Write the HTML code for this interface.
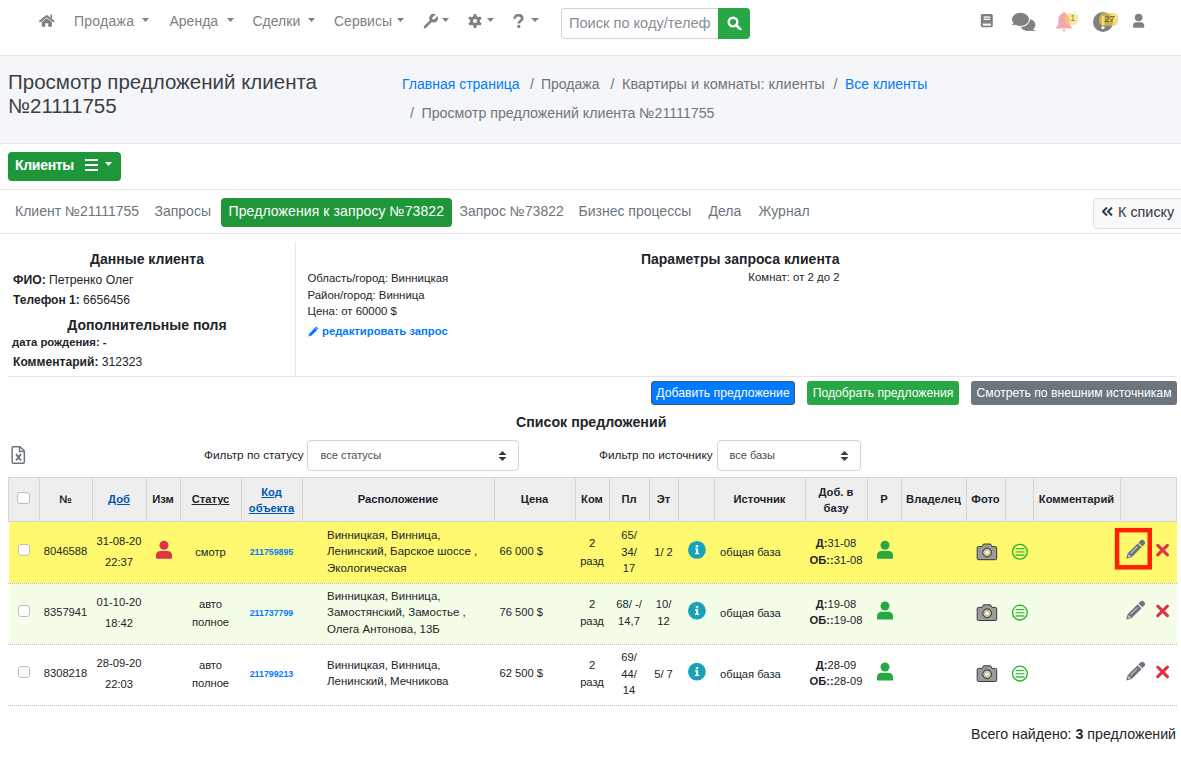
<!DOCTYPE html><html><head><meta charset="utf-8"><style>
html,body{margin:0;padding:0;width:1181px;height:769px;overflow:hidden;background:#fff;}
body{position:relative;font-family:"Liberation Sans", sans-serif;}
.t{position:absolute;white-space:nowrap;line-height:1;}
.r{position:absolute;box-sizing:border-box;}
</style></head><body>
<div class="r" style="left:0px;top:55px;width:1181px;height:1px;background:#e4e4e4;"></div>
<svg class="r" style="left:39px;top:14px;" width="17" height="13" viewBox="0 0 17 13" preserveAspectRatio="none"><path d="M1.1 7.3 L7.7 2.1 L14.4 7.3" stroke="#808080" stroke-width="2" stroke-linecap="round" stroke-linejoin="round" fill="none"/><path d="M2.8 7.9 L7.7 4.3 L12.9 7.9 L12.9 12.8 L9.2 12.8 L9.2 9.2 L6.3 9.2 L6.3 12.8 L2.8 12.8 Z" fill="#808080"/><rect x="11.4" y="0.6" width="1.7" height="3.8" fill="#808080"/></svg>
<div class="t" style="top:14.15px;font-size:14px;font-weight:400;color:#7f7f7f;letter-spacing:0.25px;left:74.00px;">Продажа</div>
<svg class="r" style="left:142px;top:18px;" width="7" height="4" viewBox="0 0 7 4" preserveAspectRatio="none"><polygon points="0,0 7,0 3.5,4" fill="#808080"/></svg>
<div class="t" style="top:14.15px;font-size:14px;font-weight:400;color:#7f7f7f;left:169.50px;">Аренда</div>
<svg class="r" style="left:226.5px;top:18px;" width="7.0" height="4" viewBox="0 0 7.0 4" preserveAspectRatio="none"><polygon points="0,0 7,0 3.5,4" fill="#808080"/></svg>
<div class="t" style="top:14.15px;font-size:14px;font-weight:400;color:#7f7f7f;left:252.50px;">Сделки</div>
<svg class="r" style="left:307.5px;top:18px;" width="7.0" height="4" viewBox="0 0 7.0 4" preserveAspectRatio="none"><polygon points="0,0 7,0 3.5,4" fill="#808080"/></svg>
<div class="t" style="top:14.15px;font-size:14px;font-weight:400;color:#7f7f7f;left:334.00px;">Сервисы</div>
<svg class="r" style="left:397px;top:18px;" width="7" height="4" viewBox="0 0 7 4" preserveAspectRatio="none"><polygon points="0,0 7,0 3.5,4" fill="#808080"/></svg>
<svg class="r" style="left:423px;top:13px;" width="16" height="16" viewBox="0 0 16 16" preserveAspectRatio="none"><path d="M2 14 L8.2 7.8" stroke="#808080" stroke-width="2.6" stroke-linecap="round"/><circle cx="10.6" cy="5.2" r="4.4" fill="#808080"/><polygon points="11.5,6.1 9.7,4.3 14.6,-0.6 16.4,1.2" fill="#fff"/><circle cx="10.6" cy="5.2" r="1.3" fill="#fff"/></svg>
<svg class="r" style="left:441.5px;top:18px;" width="7.0" height="4" viewBox="0 0 7.0 4" preserveAspectRatio="none"><polygon points="0,0 7,0 3.5,4" fill="#808080"/></svg>
<svg class="r" style="left:468px;top:14px;" width="14" height="14" viewBox="0 0 14 14" preserveAspectRatio="none"><g fill="#808080"><circle cx="7" cy="7" r="4.9"/><rect x="5.6" y="0" width="2.8" height="14" rx="0.6"/><rect x="5.6" y="0" width="2.8" height="14" rx="0.6" transform="rotate(60 7 7)"/><rect x="5.6" y="0" width="2.8" height="14" rx="0.6" transform="rotate(120 7 7)"/></g><circle cx="7" cy="7" r="2.1" fill="#fff"/></svg>
<svg class="r" style="left:486.5px;top:18px;" width="7.0" height="4" viewBox="0 0 7.0 4" preserveAspectRatio="none"><polygon points="0,0 7,0 3.5,4" fill="#808080"/></svg>
<svg class="r" style="left:513px;top:14px;" width="11" height="14" viewBox="0 0 11 14" preserveAspectRatio="none"><path d="M1.6 4.8 C1.6 2.3 3.4 1.2 5.4 1.2 C7.6 1.2 9.2 2.5 9.2 4.4 C9.2 6.8 5.8 7.2 5.8 9.4" stroke="#808080" stroke-width="2.7" fill="none"/><circle cx="5.8" cy="12.4" r="1.65" fill="#808080"/></svg>
<svg class="r" style="left:531px;top:18px;" width="8" height="4" viewBox="0 0 8 4" preserveAspectRatio="none"><polygon points="0,0 8,0 4.0,4" fill="#808080"/></svg>
<div class="r" style="left:561px;top:8px;width:158px;height:31px;border:1px solid #ced4da;border-right:none;border-radius:4px 0 0 4px;background:#fff;"></div>
<div class="t" style="top:15.64px;font-size:14.6px;font-weight:400;color:#868e96;left:569.00px;">Поиск по коду/телеф</div>
<div class="r" style="left:718px;top:8px;width:32px;height:31px;background:#28a745;border-radius:0 4px 4px 0;"></div>
<svg class="r" style="left:727px;top:16px;" width="15" height="14" viewBox="0 0 15 14" preserveAspectRatio="none"><circle cx="6" cy="6" r="4.3" stroke="#fff" stroke-width="2.4" fill="none"/><path d="M9 9 L13.5 13.5" stroke="#fff" stroke-width="2.6" stroke-linecap="round"/></svg>
<svg class="r" style="left:980px;top:13px;" width="14" height="15" viewBox="0 0 14 15" preserveAspectRatio="none"><rect x="0.8" y="1" width="12" height="13.3" rx="1.6" fill="#808080"/><rect x="3.6" y="3.4" width="6.6" height="1.3" fill="#fff"/><rect x="3.6" y="5.6" width="6.6" height="1.3" fill="#fff"/><rect x="2.8" y="10.6" width="8.2" height="2" fill="#fff"/></svg>
<svg class="r" style="left:1011px;top:12px;" width="26" height="20" viewBox="0 0 26 20" preserveAspectRatio="none"><ellipse cx="16.8" cy="12.9" rx="7.6" ry="6.1" fill="#808080"/><path d="M24.6 19.3 L20 15.5 L18.5 18.6 Z" fill="#808080"/><ellipse cx="9.5" cy="7.3" rx="9.6" ry="7.6" fill="#fff"/><ellipse cx="9.5" cy="7.3" rx="8.5" ry="6.6" fill="#808080"/><path d="M0.8 13.2 L3.6 10 L6.2 12.6 Z" fill="#808080"/></svg>
<svg class="r" style="left:1055px;top:12px;" width="18" height="20" viewBox="0 0 18 20" preserveAspectRatio="none"><path d="M9 0 C9.8 0 10.2 0.6 10.2 1.3 C13 2 14.6 4.8 14.6 7.8 L14.6 12.6 L17.6 16.6 L0.4 16.6 L3.4 12.6 L3.4 7.8 C3.4 4.8 5 2 7.8 1.3 C7.8 0.6 8.2 0 9 0 Z M7.3 17.8 L10.7 17.8 C10.7 19 9.9 19.6 9 19.6 C8.1 19.6 7.3 19 7.3 17.8 Z" fill="#f2a7b2"/></svg>
<div class="r" style="left:1065px;top:13px;width:13px;height:12px;background:rgba(255,215,80,0.55);border-radius:5px;"></div>
<div class="t" style="top:14.38px;font-size:9px;font-weight:400;color:rgba(90,80,60,0.75);left:1070.30px;">1</div>
<svg class="r" style="left:1093px;top:12px;" width="20" height="20" viewBox="0 0 20 20" preserveAspectRatio="none"><circle cx="10" cy="10" r="10" fill="#808080"/><rect x="8.6" y="4" width="2.8" height="9" fill="#fff"/><circle cx="10" cy="15.6" r="1.7" fill="#fff"/></svg>
<div class="r" style="left:1099px;top:13px;width:19px;height:13px;background:rgba(240,200,40,0.62);border-radius:5px;"></div>
<div class="t" style="top:14.26px;font-size:9.5px;font-weight:400;color:rgba(70,60,40,0.85);left:1104.30px;">27</div>
<svg class="r" style="left:1132px;top:13px;" width="14" height="15" viewBox="0 0 14 15" preserveAspectRatio="none"><circle cx="6.6" cy="4.5" r="3.8" fill="#808080"/><path d="M1 14.8 L1 12.5 C1 10.6 2.4 9.2 4.3 9.2 L8.9 9.2 C10.8 9.2 12.2 10.6 12.2 12.5 L12.2 14.8 Z" fill="#808080"/></svg>
<div class="r" style="left:0px;top:56px;width:1181px;height:87px;background:#f5f6f9;"></div>
<div class="r" style="left:0px;top:143px;width:1181px;height:1px;background:#e6e7ea;"></div>
<div class="t" style="top:72.25px;font-size:20.5px;font-weight:400;color:#3a3f44;left:8.00px;">Просмотр предложений клиента</div>
<div class="t" style="top:96.15px;font-size:20.5px;font-weight:400;color:#3a3f44;left:8.00px;">№21111755</div>
<div class="t" style="top:77.45px;font-size:14px;font-weight:400;color:#007bff;left:402.00px;">Главная страница</div>
<div class="t" style="top:77.45px;font-size:14px;font-weight:400;color:#6c757d;left:530.00px;">/</div>
<div class="t" style="top:77.45px;font-size:14px;font-weight:400;color:#6c757d;left:541.00px;">Продажа</div>
<div class="t" style="top:77.45px;font-size:14px;font-weight:400;color:#6c757d;left:610.50px;">/</div>
<div class="t" style="top:77.03px;font-size:14.5px;font-weight:400;color:#6c757d;left:622.00px;">Квартиры и комнаты: клиенты</div>
<div class="t" style="top:77.45px;font-size:14px;font-weight:400;color:#6c757d;left:833.50px;">/</div>
<div class="t" style="top:77.45px;font-size:14px;font-weight:400;color:#007bff;left:845.00px;">Все клиенты</div>
<div class="t" style="top:106.15px;font-size:14px;font-weight:400;color:#6c757d;left:410.00px;">/</div>
<div class="t" style="top:105.98px;font-size:14.2px;font-weight:400;color:#6c757d;left:421.50px;">Просмотр предложений клиента №21111755</div>
<div class="r" style="left:8px;top:152px;width:113px;height:29px;background:#20963a;border-radius:4px;"></div>
<div class="t" style="top:158.15px;font-size:14px;font-weight:700;color:#fff;letter-spacing:-0.3px;left:15.00px;">Клиенты</div>
<svg class="r" style="left:85px;top:159px;" width="13" height="12" viewBox="0 0 13 12" preserveAspectRatio="none"><rect x="0" y="0" width="13" height="2" fill="#fff"/><rect x="0" y="5" width="13" height="2" fill="#fff"/><rect x="0" y="10" width="13" height="2" fill="#fff"/></svg>
<svg class="r" style="left:105px;top:162px;" width="7" height="4" viewBox="0 0 7 4" preserveAspectRatio="none"><polygon points="0,0 7,0 3.5,4" fill="#fff"/></svg>
<div class="r" style="left:0px;top:189px;width:1181px;height:1px;background:#e3e5e8;"></div>
<div class="r" style="left:0px;top:233px;width:1181px;height:1px;background:#e3e5e8;"></div>
<div class="t" style="top:204.15px;font-size:14px;font-weight:400;color:#6c757d;left:15.00px;">Клиент №21111755</div>
<div class="t" style="top:204.15px;font-size:14px;font-weight:400;color:#6c757d;left:154.50px;">Запросы</div>
<div class="r" style="left:221px;top:198px;width:231px;height:29px;background:#20963a;border-radius:4px;"></div>
<div class="t" style="top:204.15px;font-size:14px;font-weight:400;color:#fff;letter-spacing:0.1px;left:228.50px;">Предложения к запросу №73822</div>
<div class="t" style="top:204.15px;font-size:14px;font-weight:400;color:#6c757d;left:459.50px;">Запрос №73822</div>
<div class="t" style="top:204.15px;font-size:14px;font-weight:400;color:#6c757d;left:578.50px;">Бизнес процессы</div>
<div class="t" style="top:204.15px;font-size:14px;font-weight:400;color:#6c757d;left:708.50px;">Дела</div>
<div class="t" style="top:204.15px;font-size:14px;font-weight:400;color:#6c757d;left:758.50px;">Журнал</div>
<div class="r" style="left:1093px;top:198px;width:97px;height:31px;background:#f8f9fa;border:1px solid #dee2e6;border-radius:4px;"></div>
<svg class="r" style="left:1102px;top:207px;" width="11" height="9" viewBox="0 0 11 9" preserveAspectRatio="none"><path d="M5 0.5 L1 4.5 L5 8.5 M10 0.5 L6 4.5 L10 8.5" stroke="#343a40" stroke-width="2" fill="none"/></svg>
<div class="t" style="top:204.51px;font-size:14.4px;font-weight:400;color:#343a40;left:1118.00px;">К списку</div>
<div class="t" style="top:252.35px;font-size:14px;font-weight:700;color:#212529;left:7.00px;width:280px;text-align:center;">Данные клиента</div>
<div class="t" style="top:274.27px;font-size:12.2px;font-weight:400;color:#212529;left:13.00px;"><b>ФИО:</b> Петренко Олег</div>
<div class="t" style="top:293.90px;font-size:12.05px;font-weight:400;color:#212529;left:13.00px;"><b>Телефон 1:</b> 6656456</div>
<div class="t" style="top:318.15px;font-size:14px;font-weight:700;color:#212529;left:7.00px;width:280px;text-align:center;">Дополнительные поля</div>
<div class="t" style="top:336.93px;font-size:11.3px;font-weight:700;color:#212529;left:12.00px;">дата рождения: -</div>
<div class="t" style="top:355.76px;font-size:12.1px;font-weight:400;color:#212529;left:13.00px;"><b>Комментарий:</b> 312323</div>
<div class="r" style="left:295px;top:242px;width:1px;height:134px;background:#e3e5e8;"></div>
<div class="r" style="left:8px;top:376px;width:1169px;height:1px;background:#e3e5e8;"></div>
<div class="t" style="top:272.75px;font-size:11.4px;font-weight:400;color:#212529;left:307.50px;">Область/город: Винницкая</div>
<div class="t" style="top:289.75px;font-size:11.4px;font-weight:400;color:#212529;left:307.50px;">Район/город: Винница</div>
<div class="t" style="top:306.35px;font-size:11.4px;font-weight:400;color:#212529;left:307.50px;">Цена: от 60000 $</div>
<svg class="r" style="left:308px;top:326px;" width="11" height="11" viewBox="0 0 11 11" preserveAspectRatio="none"><path d="M8.2 0.6 L10.4 2.8 L3.6 9.6 L0.5 10.5 L1.4 7.4 Z" fill="#007bff"/><path d="M7.2 1.6 L9.4 3.8" stroke="#fff" stroke-width="0.7"/></svg>
<div class="t" style="top:326.43px;font-size:11.3px;font-weight:700;color:#007bff;left:322.00px;">редактировать запрос</div>
<div class="t" style="top:251.75px;font-size:14px;font-weight:700;color:#212529;right:341.50px;">Параметры запроса клиента</div>
<div class="t" style="top:272.05px;font-size:11.4px;font-weight:400;color:#212529;right:341.50px;">Комнат: от 2 до 2</div>
<div class="r" style="left:651px;top:381px;width:144px;height:24px;background:#007bff;border:1px solid #4a5a6a;border-radius:3px;"></div>
<div class="t" style="top:387.07px;font-size:12.2px;font-weight:400;color:#fff;left:651.00px;width:144px;text-align:center;">Добавить предложение</div>
<div class="r" style="left:807px;top:381px;width:152px;height:24px;background:#28a745;border-radius:3px;"></div>
<div class="t" style="top:387.07px;font-size:12.2px;font-weight:400;color:#fff;left:807.00px;width:152px;text-align:center;">Подобрать предложения</div>
<div class="r" style="left:971px;top:381px;width:206px;height:24px;background:#6c757d;border-radius:3px;"></div>
<div class="t" style="top:387.07px;font-size:12.2px;font-weight:400;color:#fff;left:971.00px;width:206px;text-align:center;">Смотреть по внешним источникам</div>
<div class="t" style="top:415.18px;font-size:14.2px;font-weight:700;color:#212529;left:516.00px;">Список предложений</div>
<svg class="r" style="left:11px;top:446px;" width="15" height="19" viewBox="0 0 15 19" preserveAspectRatio="none"><path d="M2.3 0.75 L9 0.75 L13.35 5.1 L13.35 16 C13.35 16.7 12.9 17.15 12.2 17.15 L2.3 17.15 C1.6 17.15 1.15 16.7 1.15 16 L1.15 1.9 C1.15 1.2 1.6 0.75 2.3 0.75 Z" stroke="#6c757d" stroke-width="1.5" fill="none" stroke-linejoin="round"/><path d="M8.6 1 L8.6 5.5 L13.1 5.5" stroke="#6c757d" stroke-width="1.4" fill="none"/><path d="M5 8.2 L10 14.5 M10 8.2 L5 14.5" stroke="#6c757d" stroke-width="1.9"/></svg>
<div class="t" style="top:449.71px;font-size:11.8px;font-weight:400;color:#212529;left:204.00px;">Фильтр по статусу</div>
<div class="r" style="left:307px;top:440px;width:212px;height:31px;border:1px solid #ced4da;border-radius:4px;background:#fff;"></div>
<div class="t" style="top:449.89px;font-size:11px;font-weight:400;color:#495057;left:320.50px;">все статусы</div>
<svg class="r" style="left:498px;top:451px;" width="9" height="10" viewBox="0 0 9 10" preserveAspectRatio="none"><polygon points="4.5,0 8.5,4 0.5,4" fill="#343a40"/><polygon points="0.5,6 8.5,6 4.5,10" fill="#343a40"/></svg>
<div class="t" style="top:449.71px;font-size:11.8px;font-weight:400;color:#212529;left:599.00px;">Фильтр по источнику</div>
<div class="r" style="left:717px;top:440px;width:144px;height:31px;border:1px solid #ced4da;border-radius:4px;background:#fff;"></div>
<div class="t" style="top:449.89px;font-size:11px;font-weight:400;color:#495057;left:729.50px;">все базы</div>
<svg class="r" style="left:840px;top:451px;" width="9" height="10" viewBox="0 0 9 10" preserveAspectRatio="none"><polygon points="4.5,0 8.5,4 0.5,4" fill="#343a40"/><polygon points="0.5,6 8.5,6 4.5,10" fill="#343a40"/></svg>
<div class="r" style="left:8px;top:477px;width:1169px;height:45px;background:#eeeeee;border:1px solid #d6d6d6;"></div>
<div class="r" style="left:39px;top:477px;width:1px;height:45px;background:#d6d6d6;"></div>
<div class="r" style="left:92px;top:477px;width:1px;height:45px;background:#d6d6d6;"></div>
<div class="r" style="left:146px;top:477px;width:1px;height:45px;background:#d6d6d6;"></div>
<div class="r" style="left:180px;top:477px;width:1px;height:45px;background:#d6d6d6;"></div>
<div class="r" style="left:241px;top:477px;width:1px;height:45px;background:#d6d6d6;"></div>
<div class="r" style="left:302px;top:477px;width:1px;height:45px;background:#d6d6d6;"></div>
<div class="r" style="left:494px;top:477px;width:1px;height:45px;background:#d6d6d6;"></div>
<div class="r" style="left:575px;top:477px;width:1px;height:45px;background:#d6d6d6;"></div>
<div class="r" style="left:609px;top:477px;width:1px;height:45px;background:#d6d6d6;"></div>
<div class="r" style="left:649px;top:477px;width:1px;height:45px;background:#d6d6d6;"></div>
<div class="r" style="left:678px;top:477px;width:1px;height:45px;background:#d6d6d6;"></div>
<div class="r" style="left:714px;top:477px;width:1px;height:45px;background:#d6d6d6;"></div>
<div class="r" style="left:805px;top:477px;width:1px;height:45px;background:#d6d6d6;"></div>
<div class="r" style="left:867px;top:477px;width:1px;height:45px;background:#d6d6d6;"></div>
<div class="r" style="left:901px;top:477px;width:1px;height:45px;background:#d6d6d6;"></div>
<div class="r" style="left:966px;top:477px;width:1px;height:45px;background:#d6d6d6;"></div>
<div class="r" style="left:1005px;top:477px;width:1px;height:45px;background:#d6d6d6;"></div>
<div class="r" style="left:1033px;top:477px;width:1px;height:45px;background:#d6d6d6;"></div>
<div class="r" style="left:1120px;top:477px;width:1px;height:45px;background:#d6d6d6;"></div>
<div class="r" style="left:17.3px;top:492.3px;width:12.3px;height:12.099999999999966px;border:1.4px solid #bdbdbd;border-radius:3px;background:#fff;"></div>
<div class="t" style="top:494.12px;font-size:11.2px;font-weight:700;color:#212529;left:35.50px;width:60px;text-align:center;">№</div>
<div class="t" style="top:494.12px;font-size:11.2px;font-weight:700;color:#0056b3;left:89.00px;width:60px;text-align:center;"><u>Доб</u></div>
<div class="t" style="top:494.12px;font-size:11.2px;font-weight:700;color:#212529;left:143.00px;width:40px;text-align:center;">Изм</div>
<div class="t" style="top:494.12px;font-size:11.2px;font-weight:700;color:#212529;left:180.50px;width:60px;text-align:center;"><u>Статус</u></div>
<div class="t" style="top:486.82px;font-size:11.2px;font-weight:700;color:#0056b3;left:241.50px;width:60px;text-align:center;"><u>Код</u></div>
<div class="t" style="top:502.52px;font-size:11.2px;font-weight:700;color:#0056b3;left:241.50px;width:60px;text-align:center;"><u>объекта</u></div>
<div class="t" style="top:494.12px;font-size:11.2px;font-weight:700;color:#212529;left:303.00px;width:190px;text-align:center;">Расположение</div>
<div class="t" style="top:494.12px;font-size:11.2px;font-weight:700;color:#212529;left:494.50px;width:80px;text-align:center;">Цена</div>
<div class="t" style="top:494.12px;font-size:11.2px;font-weight:700;color:#212529;left:575.00px;width:34px;text-align:center;">Ком</div>
<div class="t" style="top:494.12px;font-size:11.2px;font-weight:700;color:#212529;left:609.00px;width:40px;text-align:center;">Пл</div>
<div class="t" style="top:494.12px;font-size:11.2px;font-weight:700;color:#212529;left:649.50px;width:28px;text-align:center;">Эт</div>
<div class="t" style="top:494.12px;font-size:11.2px;font-weight:700;color:#212529;left:714.50px;width:90px;text-align:center;">Источник</div>
<div class="t" style="top:486.82px;font-size:11.2px;font-weight:700;color:#212529;left:805.00px;width:62px;text-align:center;">Доб. в</div>
<div class="t" style="top:502.52px;font-size:11.2px;font-weight:700;color:#212529;left:805.00px;width:62px;text-align:center;">базу</div>
<div class="t" style="top:494.12px;font-size:11.2px;font-weight:700;color:#212529;left:867.00px;width:34px;text-align:center;">Р</div>
<div class="t" style="top:494.12px;font-size:11.2px;font-weight:700;color:#212529;left:901.00px;width:65px;text-align:center;">Владелец</div>
<div class="t" style="top:494.12px;font-size:11.2px;font-weight:700;color:#212529;left:966.00px;width:39px;text-align:center;">Фото</div>
<div class="t" style="top:494.12px;font-size:11.2px;font-weight:700;color:#212529;left:1033.00px;width:87px;text-align:center;">Комментарий</div>
<div class="r" style="left:9px;top:522px;width:1168px;height:62px;background:#fff96f;"></div>
<div class="r" style="left:8px;top:583px;width:1169px;height:1px;border-top:1px dotted #bdbdbd;background:#f8fcf2;"></div>
<div class="r" style="left:18.4px;top:544.0px;width:12.100000000000001px;height:12.299999999999955px;border:1.4px solid #bdbdbd;border-radius:3px;background:#fff;"></div>
<div class="t" style="top:546.32px;font-size:11.2px;font-weight:400;color:#212529;left:25.50px;width:80px;text-align:center;">8046588</div>
<div class="t" style="top:536.22px;font-size:11.2px;font-weight:400;color:#212529;left:79.00px;width:80px;text-align:center;">31-08-20</div>
<div class="t" style="top:557.42px;font-size:11.2px;font-weight:400;color:#212529;left:79.00px;width:80px;text-align:center;">22:37</div>
<div class="t" style="top:547.02px;font-size:11.2px;font-weight:400;color:#212529;left:170.50px;width:80px;text-align:center;">смотр</div>
<div class="t" style="top:548.35px;font-size:8.8px;font-weight:700;color:#007bff;left:231.50px;width:80px;text-align:center;">211759895</div>
<div class="t" style="top:529.87px;font-size:11.5px;font-weight:400;color:#212529;left:327.00px;">Винницкая, Винница,</div>
<div class="t" style="top:546.37px;font-size:11.5px;font-weight:400;color:#212529;left:327.00px;">Ленинский, Барское шоссе ,</div>
<div class="t" style="top:562.87px;font-size:11.5px;font-weight:400;color:#212529;left:327.00px;">Экологическая</div>
<div class="t" style="top:546.32px;font-size:11.2px;font-weight:400;color:#212529;left:499.50px;">66 000 $</div>
<div class="t" style="top:537.92px;font-size:11.2px;font-weight:400;color:#212529;left:552.00px;width:80px;text-align:center;">2</div>
<div class="t" style="top:555.52px;font-size:11.2px;font-weight:400;color:#212529;left:552.00px;width:80px;text-align:center;">разд</div>
<div class="t" style="top:530.42px;font-size:11.2px;font-weight:400;color:#212529;left:589.00px;width:80px;text-align:center;">65/</div>
<div class="t" style="top:546.72px;font-size:11.2px;font-weight:400;color:#212529;left:589.00px;width:80px;text-align:center;">34/</div>
<div class="t" style="top:563.02px;font-size:11.2px;font-weight:400;color:#212529;left:589.00px;width:80px;text-align:center;">17</div>
<div class="t" style="top:546.72px;font-size:11.2px;font-weight:400;color:#212529;left:623.50px;width:80px;text-align:center;">1/ 2</div>
<div class="t" style="top:547.12px;font-size:11.2px;font-weight:400;color:#212529;left:720.00px;">общая база</div>
<div class="t" style="top:538.32px;font-size:11.2px;font-weight:400;color:#212529;left:805.00px;width:62px;text-align:center;"><b>Д:</b>31-08</div>
<div class="t" style="top:554.52px;font-size:11.2px;font-weight:400;color:#212529;left:805.00px;width:62px;text-align:center;"><b>ОБ::</b>31-08</div>
<div class="r" style="left:9px;top:584px;width:1168px;height:61px;background:#f4fde8;"></div>
<div class="r" style="left:8px;top:644px;width:1169px;height:1px;border-top:1px dotted #bdbdbd;background:#f8fcf2;"></div>
<div class="r" style="left:18.4px;top:604.8000000000001px;width:12.100000000000001px;height:12.299999999999955px;border:1.4px solid #bdbdbd;border-radius:3px;background:#fff;"></div>
<div class="t" style="top:607.12px;font-size:11.2px;font-weight:400;color:#212529;left:25.50px;width:80px;text-align:center;">8357941</div>
<div class="t" style="top:597.02px;font-size:11.2px;font-weight:400;color:#212529;left:79.00px;width:80px;text-align:center;">01-10-20</div>
<div class="t" style="top:618.22px;font-size:11.2px;font-weight:400;color:#212529;left:79.00px;width:80px;text-align:center;">18:42</div>
<div class="t" style="top:599.07px;font-size:11.2px;font-weight:400;color:#212529;left:170.50px;width:80px;text-align:center;">авто</div>
<div class="t" style="top:616.57px;font-size:11.2px;font-weight:400;color:#212529;left:170.50px;width:80px;text-align:center;">полное</div>
<div class="t" style="top:609.15px;font-size:8.8px;font-weight:700;color:#007bff;left:231.50px;width:80px;text-align:center;">211737799</div>
<div class="t" style="top:590.67px;font-size:11.5px;font-weight:400;color:#212529;left:327.00px;">Винницкая, Винница,</div>
<div class="t" style="top:607.17px;font-size:11.5px;font-weight:400;color:#212529;left:327.00px;">Замостянский, Замостье ,</div>
<div class="t" style="top:623.67px;font-size:11.5px;font-weight:400;color:#212529;left:327.00px;">Олега Антонова, 13Б</div>
<div class="t" style="top:607.12px;font-size:11.2px;font-weight:400;color:#212529;left:499.50px;">76 500 $</div>
<div class="t" style="top:598.72px;font-size:11.2px;font-weight:400;color:#212529;left:552.00px;width:80px;text-align:center;">2</div>
<div class="t" style="top:616.32px;font-size:11.2px;font-weight:400;color:#212529;left:552.00px;width:80px;text-align:center;">разд</div>
<div class="t" style="top:599.37px;font-size:11.2px;font-weight:400;color:#212529;left:589.00px;width:80px;text-align:center;">68/ -/</div>
<div class="t" style="top:615.67px;font-size:11.2px;font-weight:400;color:#212529;left:589.00px;width:80px;text-align:center;">14,7</div>
<div class="t" style="top:599.02px;font-size:11.2px;font-weight:400;color:#212529;left:623.50px;width:80px;text-align:center;">10/</div>
<div class="t" style="top:616.02px;font-size:11.2px;font-weight:400;color:#212529;left:623.50px;width:80px;text-align:center;">12</div>
<div class="t" style="top:607.92px;font-size:11.2px;font-weight:400;color:#212529;left:720.00px;">общая база</div>
<div class="t" style="top:599.12px;font-size:11.2px;font-weight:400;color:#212529;left:805.00px;width:62px;text-align:center;"><b>Д:</b>19-08</div>
<div class="t" style="top:615.32px;font-size:11.2px;font-weight:400;color:#212529;left:805.00px;width:62px;text-align:center;"><b>ОБ::</b>19-08</div>
<div class="r" style="left:9px;top:645px;width:1168px;height:61px;background:#ffffff;"></div>
<div class="r" style="left:8px;top:705px;width:1169px;height:1px;border-top:1px dotted #bdbdbd;background:#f8fcf2;"></div>
<div class="r" style="left:18.4px;top:665.8000000000001px;width:12.100000000000001px;height:12.299999999999955px;border:1.4px solid #bdbdbd;border-radius:3px;background:#fff;"></div>
<div class="t" style="top:668.12px;font-size:11.2px;font-weight:400;color:#212529;left:25.50px;width:80px;text-align:center;">8308218</div>
<div class="t" style="top:658.02px;font-size:11.2px;font-weight:400;color:#212529;left:79.00px;width:80px;text-align:center;">28-09-20</div>
<div class="t" style="top:679.22px;font-size:11.2px;font-weight:400;color:#212529;left:79.00px;width:80px;text-align:center;">22:03</div>
<div class="t" style="top:660.07px;font-size:11.2px;font-weight:400;color:#212529;left:170.50px;width:80px;text-align:center;">авто</div>
<div class="t" style="top:677.57px;font-size:11.2px;font-weight:400;color:#212529;left:170.50px;width:80px;text-align:center;">полное</div>
<div class="t" style="top:670.15px;font-size:8.8px;font-weight:700;color:#007bff;left:231.50px;width:80px;text-align:center;">211799213</div>
<div class="t" style="top:659.92px;font-size:11.5px;font-weight:400;color:#212529;left:327.00px;">Винницкая, Винница,</div>
<div class="t" style="top:676.42px;font-size:11.5px;font-weight:400;color:#212529;left:327.00px;">Ленинский, Мечникова</div>
<div class="t" style="top:668.12px;font-size:11.2px;font-weight:400;color:#212529;left:499.50px;">62 500 $</div>
<div class="t" style="top:659.72px;font-size:11.2px;font-weight:400;color:#212529;left:552.00px;width:80px;text-align:center;">2</div>
<div class="t" style="top:677.32px;font-size:11.2px;font-weight:400;color:#212529;left:552.00px;width:80px;text-align:center;">разд</div>
<div class="t" style="top:652.22px;font-size:11.2px;font-weight:400;color:#212529;left:589.00px;width:80px;text-align:center;">69/</div>
<div class="t" style="top:668.52px;font-size:11.2px;font-weight:400;color:#212529;left:589.00px;width:80px;text-align:center;">44/</div>
<div class="t" style="top:684.82px;font-size:11.2px;font-weight:400;color:#212529;left:589.00px;width:80px;text-align:center;">14</div>
<div class="t" style="top:668.52px;font-size:11.2px;font-weight:400;color:#212529;left:623.50px;width:80px;text-align:center;">5/ 7</div>
<div class="t" style="top:668.92px;font-size:11.2px;font-weight:400;color:#212529;left:720.00px;">общая база</div>
<div class="t" style="top:660.12px;font-size:11.2px;font-weight:400;color:#212529;left:805.00px;width:62px;text-align:center;"><b>Д:</b>28-09</div>
<div class="t" style="top:676.32px;font-size:11.2px;font-weight:400;color:#212529;left:805.00px;width:62px;text-align:center;"><b>ОБ::</b>28-09</div>
<svg class="r" style="left:0;top:0" width="1181" height="769" viewBox="0 0 1181 769"><circle cx="164" cy="545.1999999999999" r="4.5" fill="#dc3545"/><path d="M156 557.8 L156 555.1999999999999 C156 552.5999999999999 158 551.0 160.4 551.0 L167.6 551.0 C170 551.0 172 552.5999999999999 172 555.1999999999999 L172 557.8 C172 558.4 171.6 558.8 171 558.8 L157 558.8 C156.4 558.8 156 558.4 156 557.8 Z" fill="#dc3545"/><circle cx="885" cy="545.1999999999999" r="4.5" fill="#28a745"/><path d="M877 557.8 L877 555.1999999999999 C877 552.5999999999999 879 551.0 881.4 551.0 L888.6 551.0 C891 551.0 893 552.5999999999999 893 555.1999999999999 L893 557.8 C893 558.4 892.6 558.8 892 558.8 L878 558.8 C877.4 558.8 877 558.4 877 557.8 Z" fill="#28a745"/><circle cx="696.9" cy="549.9" r="8.9" fill="#17a2b8"/><circle cx="697" cy="546.3" r="1.35" fill="#fff"/><path d="M694.9 548.4 L698.1 548.4 L698.1 553.0 L699.2 553.0 L699.2 554.3 L694.9 554.3 L694.9 553.0 L696 553.0 L696 549.5999999999999 L694.9 549.5999999999999 Z" fill="#fff"/><path d="M978.5 546.5999999999999 L982 546.5999999999999 L983.5 544.0 L990.5 544.0 L992 546.5999999999999 L995.4 546.5999999999999 C996.3 546.5999999999999 996.7 547.0 996.7 547.9 L996.7 558.4 C996.7 559.3 996.3 559.6999999999999 995.4 559.6999999999999 L978.5 559.6999999999999 C977.6 559.6999999999999 977.2 559.3 977.2 558.4 L977.2 547.9 C977.2 547.0 977.6 546.5999999999999 978.5 546.5999999999999 Z" fill="#9b9b9b" stroke="#2a2a2a" stroke-width="0.9"/><circle cx="987.1" cy="552.5" r="4.4" fill="#9b9b9b" stroke="#2a2a2a" stroke-width="0.9"/><circle cx="987.1" cy="552.5" r="3.1" fill="none" stroke="#e6e070" stroke-width="0.9"/><circle cx="987.1" cy="552.5" r="2.1" fill="#f4f4f4"/><circle cx="1019.9" cy="551.8" r="7.4" fill="none" stroke="#22b522" stroke-width="1.3"/><rect x="1015.6" y="548.1999999999999" width="8.9" height="1.1" fill="#2bb52b"/><rect x="1015.6" y="551.1999999999999" width="8.9" height="1.4" fill="#5cc35c"/><rect x="1015.6" y="554.5" width="8.9" height="1.3" fill="#2bb52b"/><g transform="translate(1126.2 558.8) rotate(-45)"><path d="M0 0 L5 -2.8 L5 2.8 Z" fill="#6c757d"/><path d="M2.3 0.2 L5 -1.3 L5 1.8 Z" fill="#fff" opacity="0.75"/><rect x="5" y="-2.8" width="14" height="5.6" fill="#6c757d"/><rect x="7" y="-1.1" width="9.5" height="0.9" fill="#fff" opacity="0.7"/><path d="M20.1 -2.8 L22.6 -2.8 A2.8 2.8 0 0 1 22.6 2.8 L20.1 2.8 Z" fill="#6c757d"/></g><path d="M1157.8 545.4 L1167.4 554.9 M1167.4 545.4 L1157.8 554.9" stroke="#dc3545" stroke-width="3.2" stroke-linecap="round"/><rect x="1117.05" y="530.2" width="32.7" height="37.1" fill="none" stroke="#ff2000" stroke-width="4.5"/><circle cx="885" cy="606.0" r="4.5" fill="#28a745"/><path d="M877 618.6 L877 616.0 C877 613.4 879 611.8000000000001 881.4 611.8000000000001 L888.6 611.8000000000001 C891 611.8000000000001 893 613.4 893 616.0 L893 618.6 C893 619.2 892.6 619.6 892 619.6 L878 619.6 C877.4 619.6 877 619.2 877 618.6 Z" fill="#28a745"/><circle cx="696.9" cy="610.7" r="8.9" fill="#17a2b8"/><circle cx="697" cy="607.1" r="1.35" fill="#fff"/><path d="M694.9 609.2 L698.1 609.2 L698.1 613.8000000000001 L699.2 613.8000000000001 L699.2 615.1 L694.9 615.1 L694.9 613.8000000000001 L696 613.8000000000001 L696 610.4 L694.9 610.4 Z" fill="#fff"/><path d="M978.5 607.4 L982 607.4 L983.5 604.8000000000001 L990.5 604.8000000000001 L992 607.4 L995.4 607.4 C996.3 607.4 996.7 607.8000000000001 996.7 608.7 L996.7 619.2 C996.7 620.1 996.3 620.5 995.4 620.5 L978.5 620.5 C977.6 620.5 977.2 620.1 977.2 619.2 L977.2 608.7 C977.2 607.8000000000001 977.6 607.4 978.5 607.4 Z" fill="#9b9b9b" stroke="#2a2a2a" stroke-width="0.9"/><circle cx="987.1" cy="613.3000000000001" r="4.4" fill="#9b9b9b" stroke="#2a2a2a" stroke-width="0.9"/><circle cx="987.1" cy="613.3000000000001" r="3.1" fill="none" stroke="#e6e070" stroke-width="0.9"/><circle cx="987.1" cy="613.3000000000001" r="2.1" fill="#f4f4f4"/><circle cx="1019.9" cy="612.6" r="7.4" fill="none" stroke="#22b522" stroke-width="1.3"/><rect x="1015.6" y="609.0" width="8.9" height="1.1" fill="#2bb52b"/><rect x="1015.6" y="612.0" width="8.9" height="1.4" fill="#5cc35c"/><rect x="1015.6" y="615.3000000000001" width="8.9" height="1.3" fill="#2bb52b"/><g transform="translate(1126.2 619.6) rotate(-45)"><path d="M0 0 L5 -2.8 L5 2.8 Z" fill="#6c757d"/><path d="M2.3 0.2 L5 -1.3 L5 1.8 Z" fill="#fff" opacity="0.75"/><rect x="5" y="-2.8" width="14" height="5.6" fill="#6c757d"/><rect x="7" y="-1.1" width="9.5" height="0.9" fill="#fff" opacity="0.7"/><path d="M20.1 -2.8 L22.6 -2.8 A2.8 2.8 0 0 1 22.6 2.8 L20.1 2.8 Z" fill="#6c757d"/></g><path d="M1157.8 606.2 L1167.4 615.7 M1167.4 606.2 L1157.8 615.7" stroke="#dc3545" stroke-width="3.2" stroke-linecap="round"/><circle cx="885" cy="667.0" r="4.5" fill="#28a745"/><path d="M877 679.6 L877 677.0 C877 674.4 879 672.8000000000001 881.4 672.8000000000001 L888.6 672.8000000000001 C891 672.8000000000001 893 674.4 893 677.0 L893 679.6 C893 680.2 892.6 680.6 892 680.6 L878 680.6 C877.4 680.6 877 680.2 877 679.6 Z" fill="#28a745"/><circle cx="696.9" cy="671.7" r="8.9" fill="#17a2b8"/><circle cx="697" cy="668.1" r="1.35" fill="#fff"/><path d="M694.9 670.2 L698.1 670.2 L698.1 674.8000000000001 L699.2 674.8000000000001 L699.2 676.1 L694.9 676.1 L694.9 674.8000000000001 L696 674.8000000000001 L696 671.4 L694.9 671.4 Z" fill="#fff"/><path d="M978.5 668.4 L982 668.4 L983.5 665.8000000000001 L990.5 665.8000000000001 L992 668.4 L995.4 668.4 C996.3 668.4 996.7 668.8000000000001 996.7 669.7 L996.7 680.2 C996.7 681.1 996.3 681.5 995.4 681.5 L978.5 681.5 C977.6 681.5 977.2 681.1 977.2 680.2 L977.2 669.7 C977.2 668.8000000000001 977.6 668.4 978.5 668.4 Z" fill="#9b9b9b" stroke="#2a2a2a" stroke-width="0.9"/><circle cx="987.1" cy="674.3000000000001" r="4.4" fill="#9b9b9b" stroke="#2a2a2a" stroke-width="0.9"/><circle cx="987.1" cy="674.3000000000001" r="3.1" fill="none" stroke="#e6e070" stroke-width="0.9"/><circle cx="987.1" cy="674.3000000000001" r="2.1" fill="#f4f4f4"/><circle cx="1019.9" cy="673.6" r="7.4" fill="none" stroke="#22b522" stroke-width="1.3"/><rect x="1015.6" y="670.0" width="8.9" height="1.1" fill="#2bb52b"/><rect x="1015.6" y="673.0" width="8.9" height="1.4" fill="#5cc35c"/><rect x="1015.6" y="676.3000000000001" width="8.9" height="1.3" fill="#2bb52b"/><g transform="translate(1126.2 680.6) rotate(-45)"><path d="M0 0 L5 -2.8 L5 2.8 Z" fill="#6c757d"/><path d="M2.3 0.2 L5 -1.3 L5 1.8 Z" fill="#fff" opacity="0.75"/><rect x="5" y="-2.8" width="14" height="5.6" fill="#6c757d"/><rect x="7" y="-1.1" width="9.5" height="0.9" fill="#fff" opacity="0.7"/><path d="M20.1 -2.8 L22.6 -2.8 A2.8 2.8 0 0 1 22.6 2.8 L20.1 2.8 Z" fill="#6c757d"/></g><path d="M1157.8 667.2 L1167.4 676.7 M1167.4 667.2 L1157.8 676.7" stroke="#dc3545" stroke-width="3.2" stroke-linecap="round"/></svg>
<div class="t" style="top:726.68px;font-size:14.2px;font-weight:400;color:#212529;right:5.00px;">Всего найдено: <b>3</b> предложений</div>
</body></html>
